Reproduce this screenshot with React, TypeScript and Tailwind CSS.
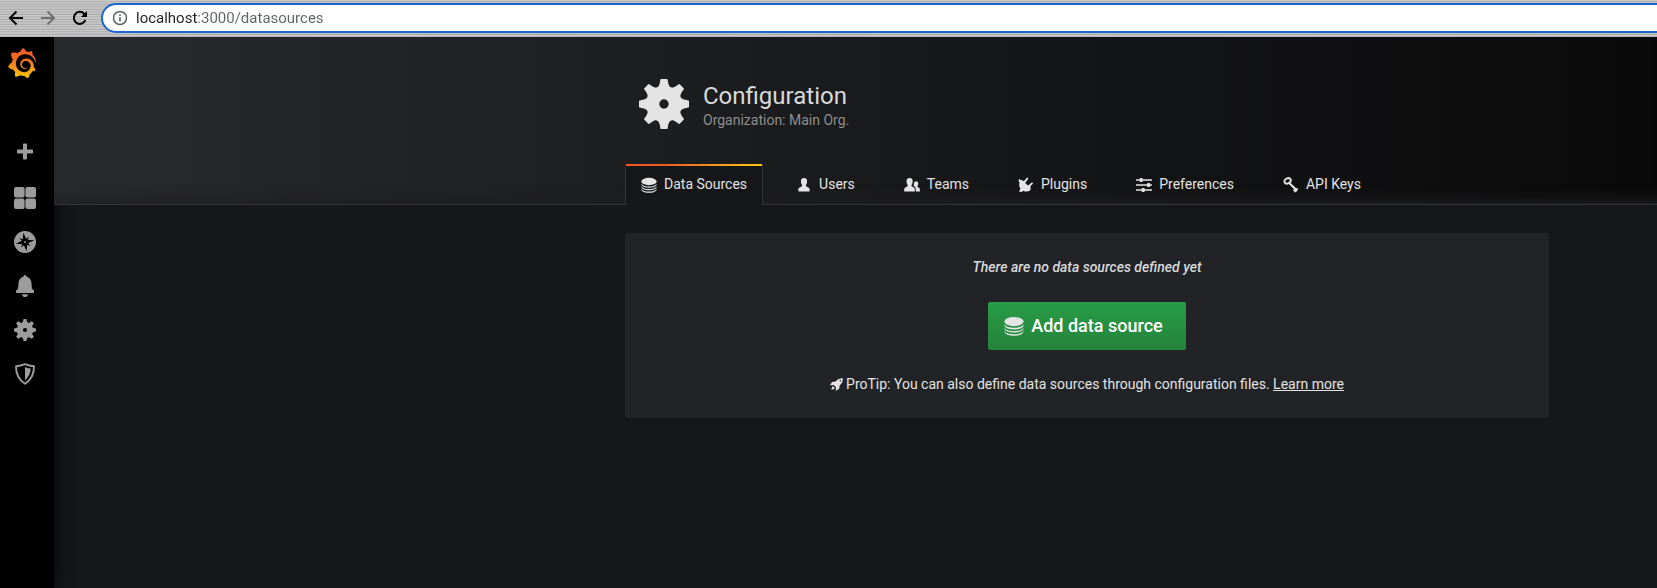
import type { ReactNode } from "react";
import { SiGrafana } from "react-icons/si";

type IconProps = { className?: string };

function Svg({ box = "0 0 16 16", className, children }: { box?: string; className?: string; children: ReactNode }) {
  return (
    <svg viewBox={box} className={className} fill="currentColor" aria-hidden="true">
      {children}
    </svg>
  );
}

function GearIcon({ className }: IconProps) {
  const teeth = [0, 45, 90, 135, 180, 225, 270, 315];
  return (
    <Svg box="0 0 50 50" className={className}>
      <path
        fillRule="evenodd"
        d="M25 7a18 18 0 1 0 0 36a18 18 0 1 0 0-36zM25 20.3a4.700 4.700 0 1 1 0 9.400a4.700 4.700 0 1 1 0-9.400z"
      />
      {teeth.map((angle) => (
        <path key={angle} transform={`rotate(${angle} 25 25)`} d="M21.400 0.600Q21.500 0 22.200 0H27.800Q28.500 0 28.600 0.600L29.400 5Q30.200 8 33.500 10.500L25 14L16.500 10.500Q19.800 8 20.600 5Z" />
      ))}
    </Svg>
  );
}

function DatabaseIcon({ className }: IconProps) {
  return (
    <Svg box="0 0 20 20" className={className}>
      <ellipse cx="10" cy="5.600" rx="9.600" ry="4.600" />
      <path d="M.4 8.600Q3 11.800 10 11.800T19.600 8.600V9.800Q18 13.500 10 13.500T.4 9.800Z" />
      <path d="M.4 11.900Q3 15.100 10 15.100T19.600 11.900V12.800Q18 16.600 10 16.600T.4 12.800Z" />
      <path d="M.4 15Q3 18.200 10 18.200T19.600 15V15.800Q18 19.700 10 19.700T.4 15.800Z" />
    </Svg>
  );
}

function UserIcon({ className }: IconProps) {
  return (
    <Svg className={className}>
      <path d="M8 1c2.200 0 3.200 1.500 3.100 3.500C11 6.300 10.300 7.300 9.900 8c0 1 .3 1.500 1.400 1.900C13 10.500 13.700 11.200 13.700 13v.8q0 .7-.7.700H3q-.7 0-.7-.7V13c0-1.800.7-2.500 2.400-3.100C5.800 9.500 6.100 9 6.100 8C5.700 7.300 5 6.300 4.900 4.500C4.800 2.500 5.800 1 8 1z" />
    </Svg>
  );
}

function TeamIcon({ className }: IconProps) {
  return (
    <Svg className={className}>
      <path d="M5.600 1c2.200 0 3.200 1.500 3.100 3.500C8.600 6.300 7.900 7.300 7.500 8c0 1 .3 1.500 1.400 1.900C10.400 10.500 10.900 11.200 10.900 13v1.500H.7q-.5 0-.5-.6V13c0-1.800.5-2.500 2.100-3.100C3.400 9.500 3.700 9 3.700 8C3.300 7.300 2.600 6.300 2.500 4.500C2.400 2.500 3.400 1 5.600 1z" />
      <path d="M12 4.200c1.600 0 2.400 1.100 2.300 2.600c-.1 1.300-.5 2-.9 2.500c0 .8.3 1 1 1.300c1.100.4 1.500 1 1.500 2.300v1.600H11.900C11.900 11 11.500 9.800 9.900 9C9.500 8.200 9.600 4.200 12 4.200z" />
    </Svg>
  );
}

function PlugIcon({ className }: IconProps) {
  return (
    <Svg className={className}>
      <path d="M2.600 3.200Q3.600 2.800 4.400 3.600L12.400 11.600Q13 12.500 12.200 13.300Q9 15.600 5.400 13.700L3.600 15L1.200 14.800L2.300 11.500Q-.2 7.400 2.600 3.200z" />
      <path d="M.8 2L4.500 3.800L3 6L.8 5z" />
      <path d="M6 5.800L9.300 1.500M10.300 9.800L14 6.400" stroke="currentColor" strokeWidth="1.900" strokeLinecap="round" />
      <path d="M4.500 4.200L6.500 3.500L7.500 6.500L10 8.500L12.800 9.500L12.200 12z" />
    </Svg>
  );
}

function SlidersIcon({ className }: IconProps) {
  return (
    <Svg className={className}>
      <path d="M0 2.300h16v1.400H0zM0 7.300h16v1.400H0zM0 12.300h16v1.400H0z" />
      <rect x="3.600" y="1" width="3.200" height="4" rx="1" />
      <rect x="11" y="6" width="3.200" height="4" rx="1" />
      <rect x="5.600" y="11" width="3.200" height="4" rx="1" />
    </Svg>
  );
}

function KeyIcon({ className }: IconProps) {
  return (
    <Svg className={className}>
      <ellipse cx="4.600" cy="3.900" rx="3.300" ry="2.500" transform="rotate(-25 4.600 3.900)" fill="none" stroke="currentColor" strokeWidth="1.900" />
      <path d="M6.300 6L13.600 13.200" stroke="currentColor" strokeWidth="2.200" />
      <path d="M9.800 13.400L12 11.200L15 11.200L14.800 13L13 15.200H11.400L11.200 14.200z" />
    </Svg>
  );
}

function RocketIcon({ className }: IconProps) {
  return (
    <Svg box="0 0 13 13" className={className}>
      <path
        fillRule="evenodd"
        d="M12.800 .2Q13.200 4.500 9.600 7.400Q9.600 10.200 8.900 10.900L6.100 12.700Q5.700 12.800 5.800 12.300L6 9.300L3.700 7L.5 7.200Q0 7.100 .3 6.600L2.200 4.100Q2.800 3.500 5.700 3.500Q8.500 0 12.800 .2zM10.300 2a.8.8 0 1 0 0 1.600a.8.8 0 1 0 0-1.600z"
      />
      <path d="M2.700 8L5 10.300L3.200 11.300L1.400 11.800L1.800 9.900z" />
    </Svg>
  );
}

function PlusIcon({ className }: IconProps) {
  return (
    <Svg box="0 0 22 22" className={className}>
      <path d="M9.800 .5h2.400q.8 0 .8.8V6.500h5.200q.8 0 .8.800v2.400q0 .8-.8.800H13v5.200q0 .8-.8.800H9.800q-.8 0-.8-.8V10.500H3.800q-.8 0-.8-.8V7.300q0-.8.8-.8H9V1.300q0-.8.8-.8z" />
    </Svg>
  );
}

function DashboardsIcon({ className }: IconProps) {
  return (
    <Svg box="0 0 22 22" className={className}>
      <rect width="10.600" height="10.600" rx="2" />
      <rect x="11.400" width="10.600" height="10.600" rx="2" />
      <rect y="11.400" width="10.600" height="10.600" rx="2" />
      <rect x="11.400" y="11.400" width="10.600" height="10.600" rx="2" />
    </Svg>
  );
}

function CompassIcon({ className }: IconProps) {
  return (
    <Svg box="0 0 22 22" className={className}>
      <circle cx="11" cy="11" r="11" />
      <g transform="rotate(-10 11 11)" className="fill-black">
        <path d="M11 1.500L13 9L20.500 11L13 13L11 20.500L9 13L1.500 11L9 9z" />
        <path d="M6.200 6.200L11 9L15.800 6.200L13 11L15.800 15.800L11 13L6.200 15.800L9 11z" />
      </g>
      <circle cx="11" cy="11" r=".9" />
    </Svg>
  );
}

function BellIcon({ className }: IconProps) {
  return (
    <Svg box="0 0 22 22" className={className}>
      <path d="M11 0q1.500 0 1.700 1.700C16.500 2.700 17.500 6 17.600 9.500C17.700 12.500 18 14.300 19.200 15H19.300q.7 0 .7.700v1.600q0 .7-.7.700H2.700Q2 18 2 17.300V15.700Q2 15 2.700 15H2.800C4 14.300 4.300 12.500 4.400 9.500C4.500 6 5.500 2.700 9.300 1.700Q9.500 0 11 0zM8 19.200h6q-.4 2.800-3 2.800t-3-2.800z" />
    </Svg>
  );
}

function ShieldIcon({ className }: IconProps) {
  return (
    <Svg box="0 0 22 22" className={className}>
      <path d="M11 1.200Q15 3 20 3.300Q20.200 15 11 20.800Q1.800 15 2 3.300Q7 3 11 1.200z" fill="none" stroke="currentColor" strokeWidth="1.900" strokeLinejoin="round" />
      <path d="M11 4Q13.500 5.200 16.700 5.600Q16.500 12.500 11 17.200z" />
    </Svg>
  );
}

const navItems = [
  { label: "Create", Icon: PlusIcon },
  { label: "Dashboards", Icon: DashboardsIcon },
  { label: "Explore", Icon: CompassIcon },
  { label: "Alerting", Icon: BellIcon },
  { label: "Configuration", Icon: GearIcon },
  { label: "Server Admin", Icon: ShieldIcon },
];

const tabs = [
  { label: "Data Sources", Icon: DatabaseIcon, active: true },
  { label: "Users", Icon: UserIcon },
  { label: "Teams", Icon: TeamIcon },
  { label: "Plugins", Icon: PlugIcon },
  { label: "Preferences", Icon: SlidersIcon },
  { label: "API Keys", Icon: KeyIcon },
];

function BrowserBar() {
  return (
    <div className="flex h-[37px] items-center overflow-hidden bg-[#bcbcbc] bg-[repeating-linear-gradient(180deg,#c9c9c9_0px,#c9c9c9_1px,#b4b4b4_1px,#b4b4b4_2px,#c2c2c2_2px,#c2c2c2_4px,#adadad_4px,#adadad_5px)] pb-px pl-2">
      <div className="flex shrink-0 gap-4">
        <button type="button" aria-label="Back" className="size-4 text-black">
          <svg viewBox="0 0 16 16" className="size-4" fill="none" stroke="currentColor" strokeWidth="2">
            <path d="M15 8H2.500M8.500 1.500L2 8L8.500 14.500" />
          </svg>
        </button>
        <button type="button" aria-label="Forward" className="size-4 text-[#707070]">
          <svg viewBox="0 0 16 16" className="size-4" fill="none" stroke="currentColor" strokeWidth="2">
            <path d="M1 8h12.500M7.500 1.500L14 8L7.500 14.500" />
          </svg>
        </button>
        <button type="button" aria-label="Reload" className="size-4 text-black">
          <svg viewBox="0 0 16 16" className="size-4" fill="none" stroke="currentColor" strokeWidth="2">
            <path d="M13.400 10.200A6 6 0 1 1 12.200 3.700L14 5.500" />
            <path d="M15 1v6H9z" fill="currentColor" stroke="none" />
          </svg>
        </button>
      </div>
      <div className="-mr-5 ml-[13px] flex h-[30px] flex-1 items-center gap-2 rounded-full border-2 border-[#1a67d2] bg-white pl-[9px]">
        <svg viewBox="0 0 16 16" className="size-4 shrink-0 text-[#5f6368]" fill="none" stroke="currentColor" strokeWidth="1.500" aria-hidden="true">
          <circle cx="8" cy="8" r="6.500" />
          <path d="M8 7.200v4M8 4.400v1.600" strokeWidth="1.700" />
        </svg>
        <input
          type="text"
          aria-label="Address"
          defaultValue="localhost:3000/datasources"
          className="min-w-0 flex-1 bg-[linear-gradient(90deg,#202124_61px,#5f6368_61px)] bg-clip-text font-[Roboto,sans-serif] text-[15px] leading-5 text-transparent outline-none"
        />
      </div>
    </div>
  );
}

function Sidebar() {
  return (
    <nav aria-label="Main" className="relative flex w-[54px] shrink-0 flex-col items-center bg-black pr-1 shadow-[0_0_20px_black]">
      <a href="#home" aria-label="Home" className="mt-[11px] mr-[6px] block">
        <svg width="0" height="0" className="absolute" aria-hidden="true">
          <linearGradient id="logo" x1="0" y1="0" x2="0" y2="1">
            <stop offset="0.05" stopColor="#f05a28" />
            <stop offset="0.4" stopColor="#f37022" />
            <stop offset="1" stopColor="#fbca0a" />
          </linearGradient>
        </svg>
        <SiGrafana className="size-[30px] [&_path]:fill-[url(#logo)]" />
      </a>
      <ul className="mt-[65px] flex flex-col gap-[22px]">
        {navItems.map(({ label, Icon }) => (
          <li key={label}>
            <a href="#nav" aria-label={label} className="block text-[#9c9c9c]">
              <Icon className="size-[22px]" />
            </a>
          </li>
        ))}
      </ul>
    </nav>
  );
}

function PageHeader() {
  return (
    <header className="grid grid-cols-[571fr_minmax(0,924px)_108fr] border-b border-[#343436] bg-[linear-gradient(90deg,#292a2d,black_129%)] shadow-[inset_0_-16px_14px_-12px_#1f1f20]">
      <div className="col-start-2">
        <div className="flex gap-[14px] pt-[42px] pl-[14px]">
          <GearIcon className="size-[50px] text-[#e3e3e3]" />
          <div>
            <h1 className="pt-[3px] text-[24px] leading-[28px] text-[#d8d9da]">Configuration</h1>
            <p className="text-[14px] leading-5 text-[#8e8e8e]">Organization: Main Org.</p>
          </div>
        </div>
        <nav aria-label="Configuration sections" className="-mb-px mt-[34px] flex gap-[17px]">
          {tabs.map(({ label, Icon, active }) => (
            <a
              key={label}
              href="#tab"
              aria-current={active ? "page" : undefined}
              className={
                active
                  ? "relative flex h-[41px] items-center gap-[7px] rounded-t-[3px] border-x border-[#343436] bg-[#161719] px-[15px] text-[14px] text-[#e3e3e3]"
                  : "flex h-[41px] items-center gap-[7px] px-4 text-[14px] text-[#e3e3e3]"
              }
            >
              {active && <span className="absolute inset-x-0 top-0 h-[2px] bg-linear-to-r from-[#f05a28] from-30% to-[#fbca0a]" />}
              <Icon className="size-4" />
              {label}
            </a>
          ))}
        </nav>
      </div>
    </header>
  );
}

export default function App() {
  return (
    <div className="flex min-h-screen flex-col bg-[#161719] font-[Roboto,sans-serif] text-[#d8d9da]">
      <BrowserBar />
      <div className="flex flex-1 overflow-hidden">
        <Sidebar />
        <main className="-z-0 order-last min-w-0 flex-1">
          <PageHeader />
          <div className="grid grid-cols-[571fr_minmax(0,924px)_108fr] pt-7">
            <section className="col-start-2 flex flex-col items-center rounded-[3px] bg-[#212327] px-6 py-6 text-[14px] leading-5">
              <p className="font-medium italic">There are no data sources defined yet</p>
              <a
                href="#new"
                className="mt-[25px] flex h-12 items-center gap-[7px] rounded-[2px] bg-linear-to-b from-[#299c46] to-[#23843b] pr-[23px] pl-4 text-[18px] font-medium text-white"
              >
                <DatabaseIcon className="size-5 text-[#e3e3e3]" />
                Add data source
              </a>
              <p className="mt-6 flex items-center gap-[3px] text-[#e3e3e3]">
                <RocketIcon className="size-[13px]" />
                <span>
                  ProTip: You can also define data sources through configuration files.{" "}
                  <a href="#learn" className="underline">
                    Learn more
                  </a>
                </span>
              </p>
            </section>
          </div>
        </main>
      </div>
    </div>
  );
}
